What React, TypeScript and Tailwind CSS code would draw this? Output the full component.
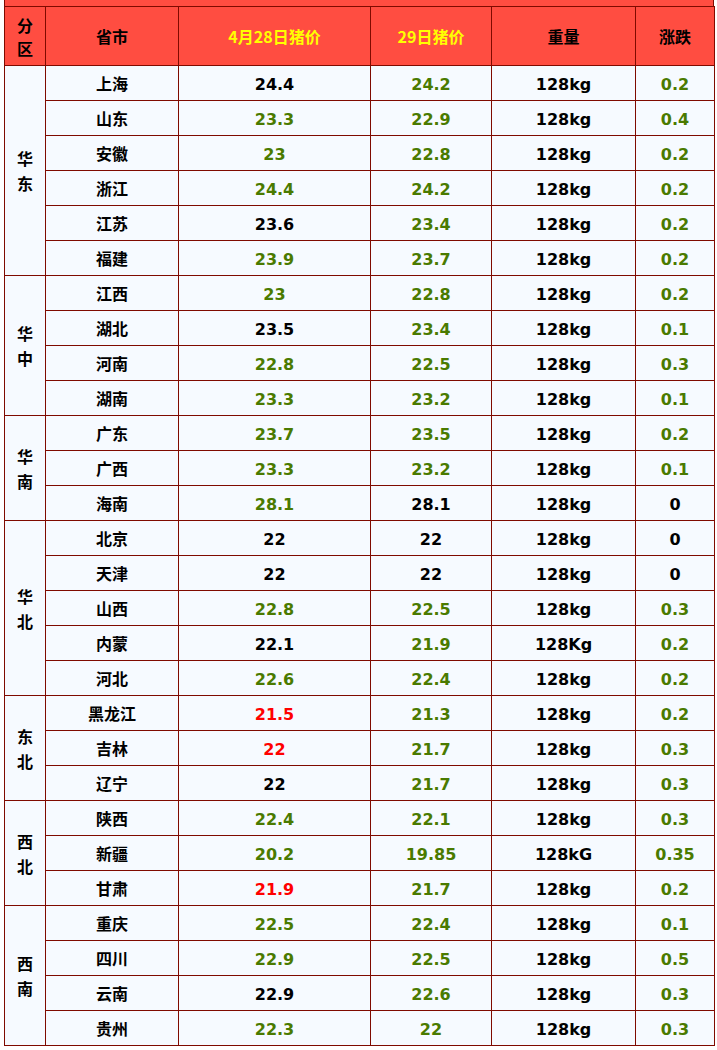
import React from "react";

type Tone = "k" | "g" | "r";

interface Row {
  city: string;
  p28: string;
  c28: Tone;
  p29: string;
  c29: Tone;
  weight: string;
  diff: string;
  cd: Tone;
}

interface Region {
  name: string;
  rows: Row[];
}

const r = (
  city: string,
  p28: string,
  c28: Tone,
  p29: string,
  c29: Tone,
  diff: string,
  cd: Tone,
  weight = "128kg"
): Row => ({ city, p28, c28, p29, c29, weight, diff, cd });

const regions: Region[] = [
  {
    name: "华东",
    rows: [
      r("上海", "24.4", "k", "24.2", "g", "0.2", "g"),
      r("山东", "23.3", "g", "22.9", "g", "0.4", "g"),
      r("安徽", "23", "g", "22.8", "g", "0.2", "g"),
      r("浙江", "24.4", "g", "24.2", "g", "0.2", "g"),
      r("江苏", "23.6", "k", "23.4", "g", "0.2", "g"),
      r("福建", "23.9", "g", "23.7", "g", "0.2", "g"),
    ],
  },
  {
    name: "华中",
    rows: [
      r("江西", "23", "g", "22.8", "g", "0.2", "g"),
      r("湖北", "23.5", "k", "23.4", "g", "0.1", "g"),
      r("河南", "22.8", "g", "22.5", "g", "0.3", "g"),
      r("湖南", "23.3", "g", "23.2", "g", "0.1", "g"),
    ],
  },
  {
    name: "华南",
    rows: [
      r("广东", "23.7", "g", "23.5", "g", "0.2", "g"),
      r("广西", "23.3", "g", "23.2", "g", "0.1", "g"),
      r("海南", "28.1", "g", "28.1", "k", "0", "k"),
    ],
  },
  {
    name: "华北",
    rows: [
      r("北京", "22", "k", "22", "k", "0", "k"),
      r("天津", "22", "k", "22", "k", "0", "k"),
      r("山西", "22.8", "g", "22.5", "g", "0.3", "g"),
      r("内蒙", "22.1", "k", "21.9", "g", "0.2", "g", "128Kg"),
      r("河北", "22.6", "g", "22.4", "g", "0.2", "g"),
    ],
  },
  {
    name: "东北",
    rows: [
      r("黑龙江", "21.5", "r", "21.3", "g", "0.2", "g"),
      r("吉林", "22", "r", "21.7", "g", "0.3", "g"),
      r("辽宁", "22", "k", "21.7", "g", "0.3", "g"),
    ],
  },
  {
    name: "西北",
    rows: [
      r("陕西", "22.4", "g", "22.1", "g", "0.3", "g"),
      r("新疆", "20.2", "g", "19.85", "g", "0.35", "g", "128kG"),
      r("甘肃", "21.9", "r", "21.7", "g", "0.2", "g"),
    ],
  },
  {
    name: "西南",
    rows: [
      r("重庆", "22.5", "g", "22.4", "g", "0.1", "g"),
      r("四川", "22.9", "g", "22.5", "g", "0.5", "g"),
      r("云南", "22.9", "k", "22.6", "g", "0.3", "g"),
      r("贵州", "22.3", "g", "22", "g", "0.3", "g"),
    ],
  },
];

const toneClass: Record<Tone, string> = {
  k: "text-black",
  g: "text-[#4a7a00]",
  r: "text-[#ff0000]",
};

const cell = "border border-[#7f0a00] text-center align-middle p-0";
const num = "font-['DejaVu_Sans',sans-serif] text-[16px] font-bold pt-[3px]";

export default function App() {
  return (
    <div className="w-[717px] bg-white pl-[4px] font-['Noto_Sans_CJK_SC',sans-serif] font-bold">
      <div className="h-[6px] w-[710px] bg-[#ff4d41] border-x border-[#7f0a00]" />
      <table className="w-[710px] table-fixed border-collapse text-[16px] leading-none">
        <colgroup>
          <col className="w-[41px]" />
          <col className="w-[133px]" />
          <col className="w-[192px]" />
          <col className="w-[121px]" />
          <col className="w-[144px]" />
          <col className="w-[79px]" />
        </colgroup>
        <thead>
          <tr className="h-[59px] bg-[#ff4d41]">
            <th className={cell}>
              <div className="flex flex-col items-center gap-[7px]">
                <span>分</span>
                <span>区</span>
              </div>
            </th>
            <th className={cell}>省市</th>
            <th className={`${cell} text-[#ffff00]`}>4月28日猪价</th>
            <th className={`${cell} text-[#ffff00]`}>29日猪价</th>
            <th className={cell}>重量</th>
            <th className={cell}>涨跌</th>
          </tr>
        </thead>
        <tbody>
          {regions.map((reg) =>
            reg.rows.map((row, i) => (
              <tr key={row.city} className="h-[35px] bg-[#f6faff]">
                {i === 0 && (
                  <td rowSpan={reg.rows.length} className={cell}>
                    <div className="flex flex-col items-center gap-[9px]">
                      {reg.name.split("").map((ch) => (
                        <span key={ch}>{ch}</span>
                      ))}
                    </div>
                  </td>
                )}
                <td className={cell}>{row.city}</td>
                <td className={`${cell} ${num} ${toneClass[row.c28]}`}>
                  {row.p28}
                </td>
                <td className={`${cell} ${num} ${toneClass[row.c29]}`}>
                  {row.p29}
                </td>
                <td className={`${cell} ${num} text-black`}>{row.weight}</td>
                <td className={`${cell} ${num} ${toneClass[row.cd]}`}>
                  {row.diff}
                </td>
              </tr>
            ))
          )}
        </tbody>
      </table>
    </div>
  );
}
